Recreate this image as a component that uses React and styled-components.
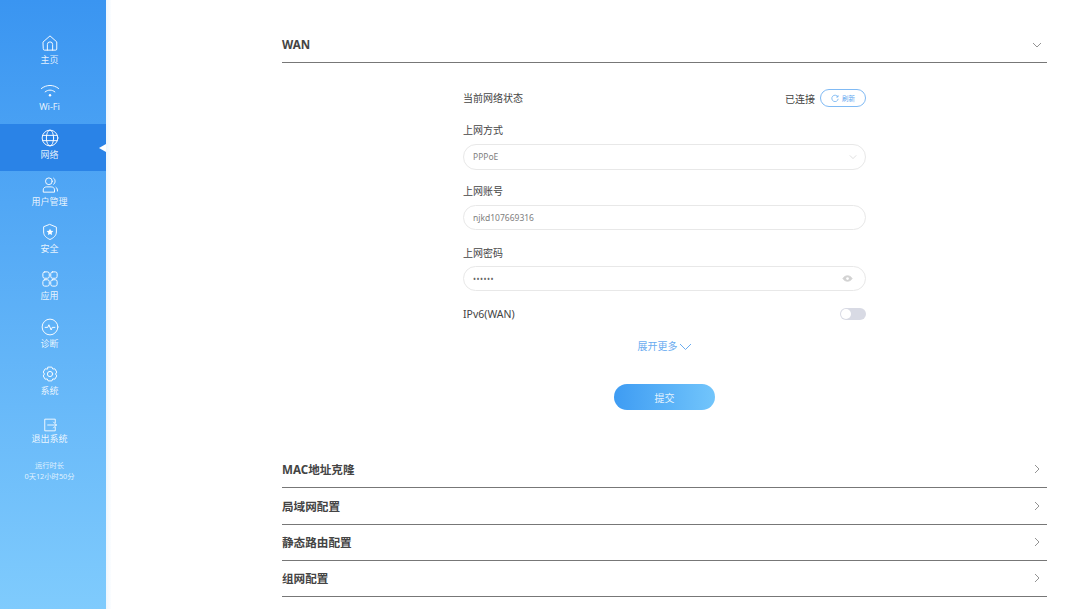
import React from 'react';
import styled, { createGlobalStyle } from 'styled-components';

const Global = createGlobalStyle`
  html, body { margin: 0; padding: 0; height: 100%; overflow: hidden; background: #fff; }
  body { font-family: "Noto Sans", "Noto Sans CJK SC", sans-serif; color: #444; }
  * { box-sizing: border-box; }
`;

const Page = styled.div`
  display: flex;
  width: 1080px;
  height: 609px;
  overflow: hidden;
`;

const Sidebar = styled.nav`
  width: 106px;
  height: 609px;
  flex: none;
  padding-top: 29px;
  background: linear-gradient(180deg, #3a95f1 0%, #7fcbfd 100%);
  color: #fff;
`;

const Edge = styled.div`
  width: 5px;
  flex: none;
  background: linear-gradient(90deg, #eef6fd, #fbfdff);
`;

const NavItem = styled.div`
  position: relative;
  height: ${p => p.$h || 47.3}px;
  display: flex;
  flex-direction: column;
  align-items: center;
  padding: 5px 7px 0 0;
  background: ${p => (p.$active ? '#2a83e7' : 'transparent')};
  svg { display: block; width: 18px; height: 18px; flex: none; }
`;

const ExitItem = styled(NavItem)`
  padding-top: 10.5px;
  svg { width: 14px; height: 14px; }
`;

const NavLabel = styled.span`
  font-size: 9px;
  line-height: 14px;
  margin-top: ${p => p.$mt ?? 1}px;
  color: rgba(255, 255, 255, 0.88);
`;

const ActiveMark = styled.i`
  position: absolute;
  right: 0;
  top: 20px;
  width: 0;
  height: 0;
  border-top: 4px solid transparent;
  border-bottom: 4px solid transparent;
  border-right: 7px solid #fff;
`;

const Uptime = styled.div`
  margin-top: 5px;
  padding-right: 7px;
  text-align: center;
  font-size: 7.3px;
  line-height: 11px;
  color: rgba(255, 255, 255, 0.8);
`;

const Main = styled.main`
  flex: 1;
  padding: 0 33px 0 171px;
`;

const SectionHead = styled.header`
  height: ${p => p.$h}px;
  display: flex;
  align-items: flex-end;
  justify-content: space-between;
  padding-bottom: 9px;
  border-bottom: 1px solid #777;
`;

const SectionTitle = styled.h2`
  margin: 0;
  font-size: 11.6px;
  line-height: 16px;
  font-weight: 700;
  color: #444;
`;

const Chevron = styled.svg`
  width: 10px;
  height: 10px;
  margin-right: 5px;
  margin-bottom: ${p => (p.$open ? 3 : 4)}px;
  fill: none;
  stroke: #888;
  stroke-width: 0.9;
`;

const Form = styled.form`
  width: 403px;
  margin-left: 181px;
  display: flex;
  flex-direction: column;
`;

const StatusRow = styled.div`
  height: 24px;
  margin-top: 23px;
  display: flex;
  align-items: center;
  justify-content: space-between;
`;

const Label = styled.label`
  display: block;
  font-size: 10px;
  line-height: 14px;
  color: #444;
`;

const StatusRight = styled.div`
  display: flex;
  align-items: center;
  gap: 5px;
  font-size: 10px;
  margin-left: -1px;
`;

const RefreshBtn = styled.button`
  width: 46px;
  height: 18px;
  padding: 0;
  display: flex;
  align-items: center;
  justify-content: center;
  gap: 3px;
  border: 1px solid #80baf4;
  border-radius: 9px;
  background: #fff;
  color: #5fa8f0;
  font: inherit;
  font-size: 6.5px;
  svg { width: 8px; height: 8px; }
`;

const FieldLabel = styled(Label)`
  margin-top: ${p => p.$mt}px;
  margin-bottom: ${p => p.$mb || 7}px;
`;

const Field = styled.div`
  height: 25.5px;
  padding: 0 9px;
  display: flex;
  align-items: center;
  justify-content: space-between;
  border: 1px solid #e8e8e8;
  border-radius: 13px;
  background: #fff;
  font-size: 8.5px;
  color: #808080;
`;

const Dots = styled.span`
  font-size: 8px;
  letter-spacing: 0.5px;
  color: #666;
`;

const FieldIcon = styled.svg`
  width: ${p => p.$size || 11}px;
  height: ${p => p.$size || 11}px;
  margin-right: ${p => p.$mr || 0}px;
  fill: none;
  stroke: #d2d2d2;
  stroke-width: ${p => p.$sw || 1};
`;

const ToggleRow = styled.div`
  height: 14px;
  margin-top: 16px;
  display: flex;
  align-items: center;
  justify-content: space-between;
  font-size: 10.5px;
  color: #444;
`;

const Toggle = styled.span`
  position: relative;
  display: block;
  width: 26px;
  height: 12px;
  border-radius: 6px;
  background: #d8dae4;
  &::after {
    content: '';
    position: absolute;
    left: 1px;
    top: 1px;
    width: 10px;
    height: 10px;
    border-radius: 50%;
    background: #fff;
  }
`;

const More = styled.div`
  margin-top: 18px;
  display: flex;
  align-items: center;
  justify-content: center;
  gap: 1px;
  font-size: 10px;
  line-height: 14px;
  color: #6aacf0;
  svg { width: 13px; height: 8px; fill: none; stroke: #6aacf0; stroke-width: 1; margin-top: 1px; }
`;

const Submit = styled.button`
  align-self: center;
  width: 101px;
  height: 26px;
  margin-top: 31px;
  margin-bottom: 42px;
  padding: 0;
  border: 0;
  border-radius: 13px;
  background: linear-gradient(90deg, #3e9cf3, #72c5fb);
  color: rgba(255, 255, 255, 0.85);
  font: inherit;
  font-size: 10px;
`;

const ic = { fill: 'none', stroke: '#fff', strokeWidth: 1.25, strokeLinecap: 'round', strokeLinejoin: 'round', viewBox: '0 0 24 24' };

const items = [
  { label: '主页', icon: <svg {...ic}><path d="M3 10.500 12 2.500l9 8V20a1.500 1.500 0 0 1-1.500 1.500h-15A1.500 1.500 0 0 1 3 20z" /><path d="M8.500 21.500V14a3.500 3.500 0 0 1 7 0v7.500" /></svg> },
  { label: 'Wi-Fi', icon: <svg {...ic}><path d="M.5 10c7-5.500 16-5.500 23 0" /><path d="M5.500 14.500c4-3.200 9-3.200 13 0" /><circle cx="12" cy="19" r="1.600" fill="#fff" stroke="none" /></svg> },
  { label: '网络', active: true, icon: <svg {...ic}><circle cx="12" cy="12" r="10.500" /><ellipse cx="12" cy="12" rx="4.800" ry="10.500" /><path d="M2.500 8.500h19M2.500 15.500h19" /></svg> },
  { label: '用户管理', icon: <svg {...ic}><circle cx="10.500" cy="7" r="4.500" /><path d="M3 21v-2.500C3 16 5 14.500 7.500 14.500h6c2.500 0 4.500 1.500 4.500 4V21z" /><path d="M17 3c2.500 1.500 2.500 6.500 0 8M20 15c1.500 1 2 3 2 5" /></svg> },
  { label: '安全', icon: <svg {...ic}><path d="M12 2 20.500 5.500V12c0 5-4 8-8.500 10C7.500 20 3.500 17 3.500 12V5.500z" /><path fill="#fff" stroke="none" d="m12 7.500 1.400 2.900 3.100.4-2.300 2.200.6 3.100-2.800-1.500-2.800 1.500.6-3.100-2.300-2.200 3.100-.4z" /></svg> },
  { label: '应用', icon: <svg {...ic}><rect x="2.500" y="2.500" width="8.500" height="8.500" rx="2.500" /><rect x="13" y="2.500" width="8.500" height="8.500" rx="2.500" /><rect x="2.500" y="13" width="8.500" height="8.500" rx="2.500" /><rect x="13" y="13" width="8.500" height="8.500" rx="2.500" /></svg> },
  { label: '诊断', icon: <svg {...ic}><circle cx="12" cy="12" r="10.500" /><path d="M5.500 12.500H9l1.500-3.500 3 7 1.500-3.500h3.500" /></svg> },
  { label: '系统', icon: <svg {...ic}><path d="M9.500 2.800h5l1.200 2.600 2.800-.3 2.500 4.300-1.600 2.600 1.600 2.600-2.500 4.300-2.800-.3-1.200 2.600h-5l-1.200-2.600-2.800.3L3 14.600 4.600 12 3 9.400l2.500-4.300 2.800.3z" /><circle cx="12" cy="12" r="3.500" /></svg> },
];

const Down = () => <path d="M1 3l4 4 4-4" />;

const Section = ({ title, open }) => (
  <SectionHead $h={open ? 63 : 36.3}>
    <SectionTitle>{title}</SectionTitle>
    <Chevron viewBox="0 0 10 10" $open={open}>{open ? <Down /> : <path d="M3 1l4 4-4 4" />}</Chevron>
  </SectionHead>
);

export default function App() {
  return (
    <Page>
      <Global />
      <Sidebar>
        {items.map(it => (
          <NavItem key={it.label} $active={it.active}>
            {it.icon}
            <NavLabel>{it.label}</NavLabel>
            {it.active && <ActiveMark />}
          </NavItem>
        ))}
        <ExitItem $h={47.6}>
          <svg {...ic} strokeWidth={1.5}><path d="M21 8V2H3v20h18v-6" /><path d="M8 12h15M18 7l5 5-5 5" /></svg>
          <NavLabel $mt={0}>退出系统</NavLabel>
        </ExitItem>
        <Uptime>运行时长<br />0天12小时50分</Uptime>
      </Sidebar>
      <Edge />
      <Main>
        <Section title="WAN" open />
        <Form>
          <StatusRow>
            <Label>当前网络状态</Label>
            <StatusRight>
              已连接
              <RefreshBtn type="button">
                <svg viewBox="0 0 10 10" fill="none" stroke="#5fa8f0" strokeWidth="0.9"><path d="M8.500 3.500A4 4 0 1 0 9 6" /><path d="M8.800 1.500v2.300H6.500" /></svg>
                刷新
              </RefreshBtn>
            </StatusRight>
          </StatusRow>
          <FieldLabel $mt={13}>上网方式</FieldLabel>
          <Field>
            PPPoE
            <FieldIcon viewBox="0 0 10 10" $sw={0.9} $size={8} $mr={-1}><Down /></FieldIcon>
          </Field>
          <FieldLabel $mt={14}>上网账号</FieldLabel>
          <Field>njkd107669316</Field>
          <FieldLabel $mt={15.500} $mb={6}>上网密码</FieldLabel>
          <Field>
            <Dots>••••••</Dots>
            <FieldIcon viewBox="0 0 12 12" $mr={3}><path d="M1 6c2.500-4 7.500-4 10 0-2.500 4-7.500 4-10 0z" fill="#d2d2d2" /><circle cx="6" cy="6" r="1.500" fill="#fff" stroke="none" /></FieldIcon>
          </Field>
          <ToggleRow>
            IPv6(WAN)
            <Toggle />
          </ToggleRow>
          <More>
            展开更多
            <svg viewBox="0 0 13 8"><path d="M1 1l5.500 5.500L12 1" /></svg>
          </More>
          <Submit type="button">提交</Submit>
        </Form>
        <Section title="MAC地址克隆" />
        <Section title="局域网配置" />
        <Section title="静态路由配置" />
        <Section title="组网配置" />
      </Main>
    </Page>
  );
}
